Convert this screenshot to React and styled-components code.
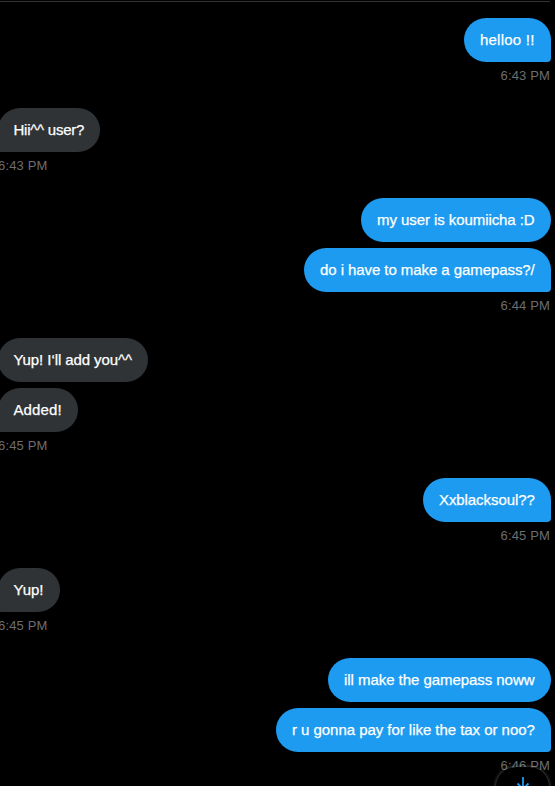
import React from 'react';
import styled, { createGlobalStyle } from 'styled-components';

const GlobalStyle = createGlobalStyle`
  body {
    margin: 0;
    background: #000;
    overflow: hidden;
    font-family: 'Liberation Sans', Arial, sans-serif;
  }
`;

const Container = styled.div`
  position: relative;
  box-sizing: border-box;
  width: 555px;
  height: 786px;
  padding: 1px 4px 0 0;
  background: #000;
  overflow: hidden;
`;

const Divider = styled.div`
  height: 1px;
  margin-right: 1px;
  background: #2f3336;
`;

const Thread = styled.div`
  display: flex;
  flex-direction: column;
  gap: 24px;
  margin-left: -2px;
  padding-top: 16px;
`;

const Group = styled.div`
  display: flex;
  flex-direction: column;
  align-items: ${({ $sent }) => ($sent ? 'flex-end' : 'flex-start')};
  gap: 6px;
`;

const Bubble = styled.div`
  box-sizing: border-box;
  width: ${({ $width }) => $width}px;
  height: 44px;
  padding: 12px 0 12px ${({ $sent }) => ($sent ? 16 : 15.5)}px;
  border-radius: 22px;
  border-bottom-right-radius: ${({ $sent, $last }) => ($sent && $last ? 4 : 22)}px;
  border-bottom-left-radius: ${({ $sent, $last }) => (!$sent && $last ? 4 : 22)}px;
  background: ${({ $sent }) => ($sent ? '#1d9bf0' : '#2f3336')};
  color: #fff;
  font-size: 15px;
  line-height: 20px;
  letter-spacing: ${({ $spacing }) => $spacing}px;
  white-space: nowrap;
  -webkit-text-stroke: 0.25px #fff;
`;

const Time = styled.div`
  height: 16px;
  padding-right: 1px;
  color: #6b6e72;
  font-size: 13px;
  line-height: 16px;
  letter-spacing: 0.15px;
`;

const ScrollButton = styled.button`
  position: absolute;
  left: 496px;
  top: 767px;
  display: flex;
  justify-content: center;
  box-sizing: border-box;
  width: 53px;
  height: 44px;
  padding: 9px 0 0;
  border: none;
  border-radius: 20px;
  background: #000;
  box-shadow: 0 0 3px 1px rgba(255, 255, 255, 0.25);
`;

const groups = [
  { sent: true, time: '6:43 PM', messages: [{ text: 'helloo !!', width: 87, spacing: 0.22 }] },
  { sent: false, time: '6:43 PM', messages: [{ text: 'Hii^^ user?', width: 102, spacing: -0.23 }] },
  {
    sent: true,
    time: '6:44 PM',
    messages: [
      { text: 'my user is koumiicha :D', width: 190, spacing: -0.07 },
      { text: 'do i have to make a gamepass?/', width: 247, spacing: -0.07 },
    ],
  },
  {
    sent: false,
    time: '6:45 PM',
    messages: [
      { text: 'Yup! I‘ll add you^^', width: 150, spacing: -0.08 },
      { text: 'Added!', width: 80, spacing: 0.12 },
    ],
  },
  { sent: true, time: '6:45 PM', messages: [{ text: 'Xxblacksoul??', width: 128, spacing: -0.08 }] },
  { sent: false, time: '6:45 PM', messages: [{ text: 'Yup!', width: 62, spacing: 0 }] },
  {
    sent: true,
    time: '6:46 PM',
    messages: [
      { text: 'ill make the gamepass noww', width: 223, spacing: -0.05 },
      { text: 'r u gonna pay for like the tax or noo?', width: 275, spacing: -0.04 },
    ],
  },
];

const App = () => {
  return (
    <Container>
      <GlobalStyle />
      <Divider />
      <Thread>
        {groups.map((group, index) => (
          <Group key={index} $sent={group.sent}>
            {group.messages.map((message, i) => (
              <Bubble
                key={message.text}
                $sent={group.sent}
                $last={i === group.messages.length - 1}
                $width={message.width}
                $spacing={message.spacing}
              >
                <span>{message.text}</span>
              </Bubble>
            ))}
            <Time>{group.time}</Time>
          </Group>
        ))}
      </Thread>
      <ScrollButton aria-label="Scroll to bottom">
        <svg width="16" height="20" viewBox="0 0 16 20" fill="none" stroke="#1d9bf0" strokeWidth="1.8">
          <path d="M8 1v16M2.5 7.5l5.5 5.5 5.5-5.5" />
        </svg>
      </ScrollButton>
    </Container>
  );
};

export default App;
